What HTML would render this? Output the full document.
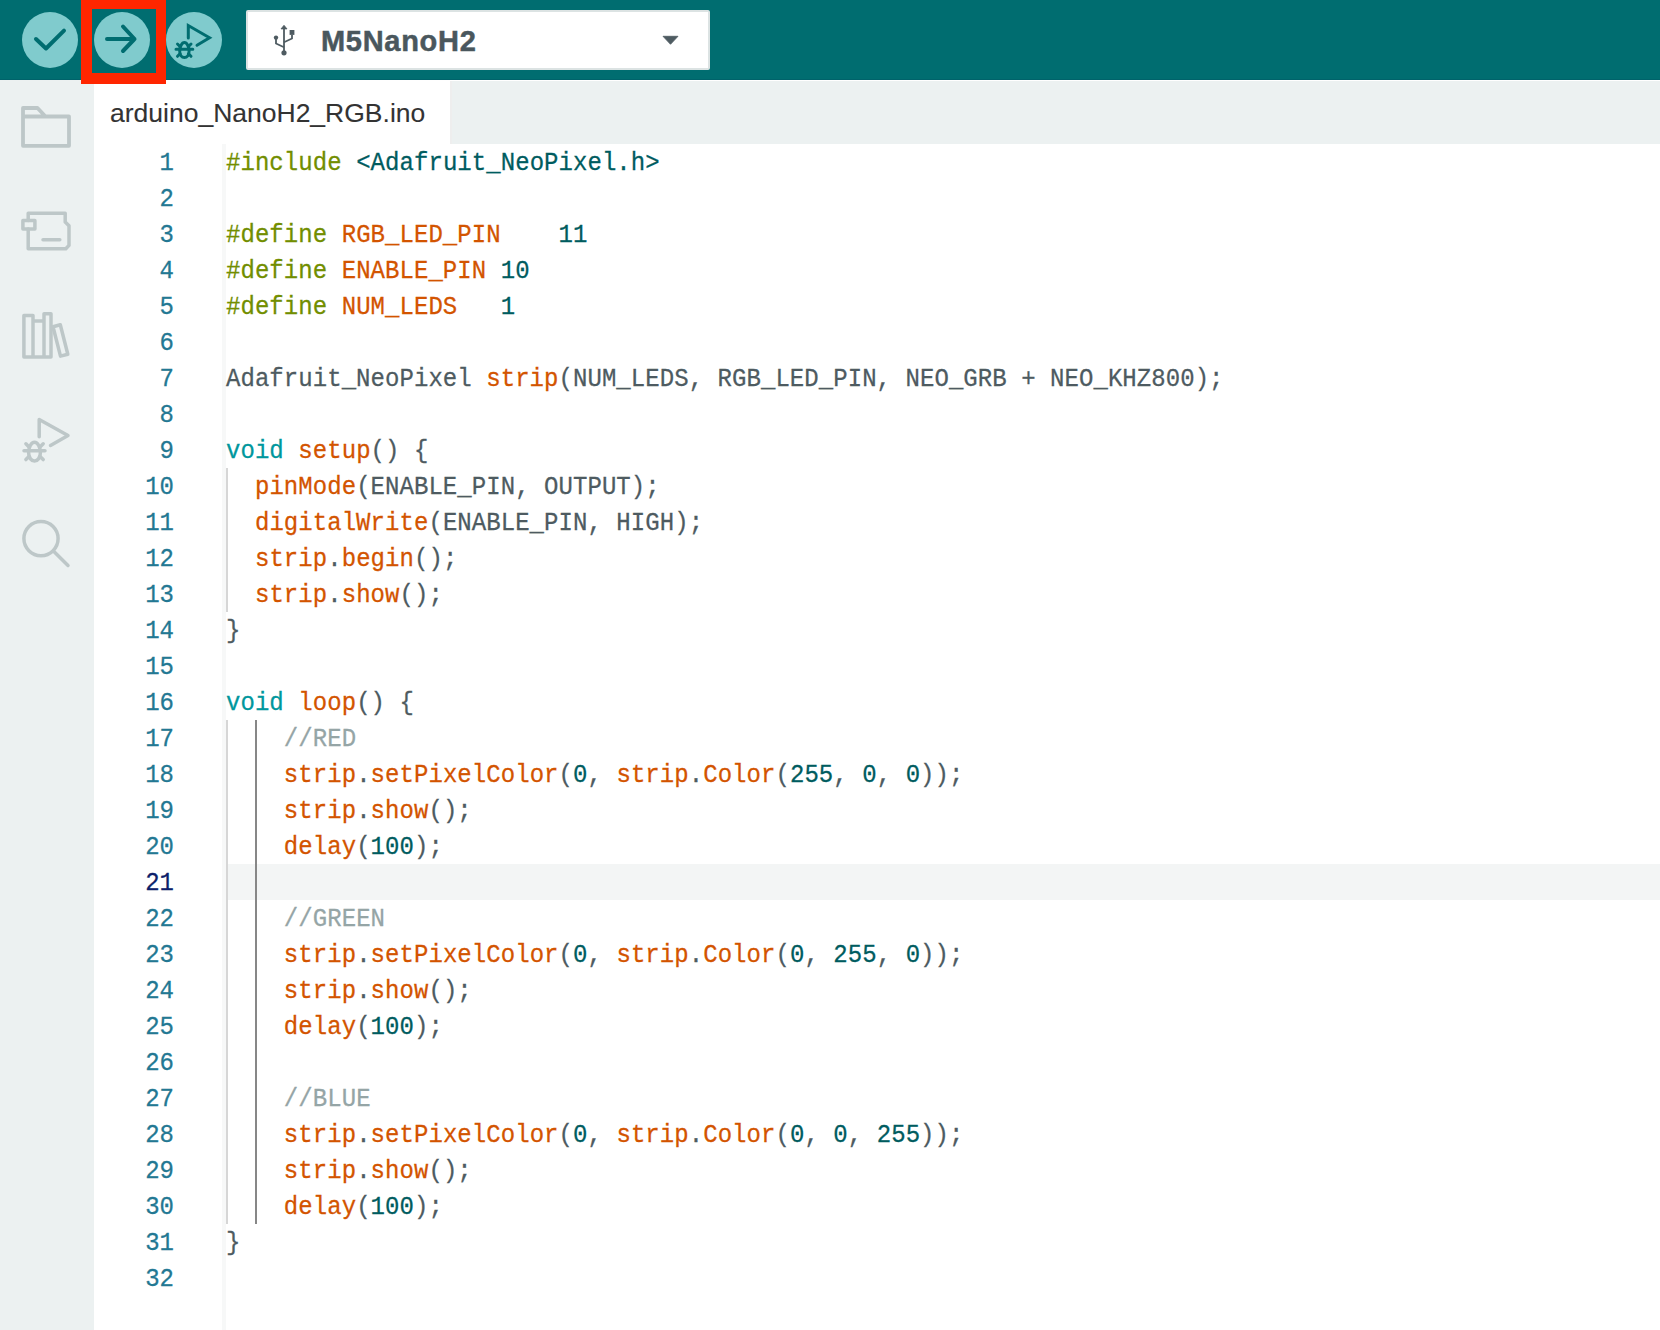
<!DOCTYPE html>
<html><head><meta charset="utf-8">
<style>
*{box-sizing:border-box;margin:0;padding:0}
html,body{width:1660px;height:1330px;overflow:hidden;background:#fff}
body{position:relative;font-family:"Liberation Sans",sans-serif}
svg{position:absolute;left:0;top:0;overflow:visible}
#hdr{position:absolute;left:0;top:0;width:1660px;height:80px;background:#006D70}
#board{position:absolute;left:246px;top:10px;width:464px;height:60px;background:#fff;border:2px solid #DCE3E3;border-radius:2px}
#board .name{position:absolute;left:73px;top:11.5px;font-weight:bold;font-size:29px;line-height:34px;color:#4A575D;letter-spacing:0.7px;-webkit-text-stroke:0.5px currentColor}
#side{position:absolute;left:0;top:80px;width:94px;height:1250px;background:#ECF1F1}
#tabbar{position:absolute;left:94px;top:81px;width:1566px;height:63px;background:#ECF1F1}
#hline{position:absolute;left:0;top:79px;width:1660px;height:1px;background:#00626A}
#tabedge{position:absolute;left:450px;top:81px;width:2px;height:63px;background:#EEEEEE}
#tab{position:absolute;left:94px;top:80px;width:356px;height:64px;background:#fff}
#tab span{position:absolute;left:16px;top:18px;-webkit-text-stroke:0.1px currentColor;font-size:26.5px;line-height:30px;color:#333333;white-space:nowrap}
#strip{position:absolute;left:222px;top:144px;width:4px;height:1186px;background:#F7F8F8}
.ln{position:absolute;left:94px;width:80px;height:36px;line-height:38px;transform:translateY(1.4px) scaleY(1.08);transform-origin:0 24.5px;-webkit-text-stroke:0.25px currentColor;text-align:right;font-family:"Liberation Mono",monospace;font-size:24px;color:#237893}
.ln.cur{color:#0D1F6B}
.cl{position:absolute;left:226px;height:36px;line-height:38px;transform:translateY(1.4px) scaleY(1.08);transform-origin:0 24.5px;white-space:pre;font-family:"Liberation Mono",monospace;font-size:24px;letter-spacing:0.055px;color:#4E5B61;-webkit-text-stroke:0.25px currentColor}
.pp{color:#728E00}.st{color:#005C5F}.fn{color:#D35400}.kw{color:#00979D}.nm{color:#005C5F}.cm{color:#95A5A6}
#curline{position:absolute;left:228px;top:864px;width:1432px;height:36px;background:#F3F5F5}
.g1{position:absolute;left:226px;width:2px;background:#D6D6D6}
.g2{position:absolute;left:255px;width:2px;background:#878787}
#redbox{position:absolute;left:81px;top:-1px;width:84.5px;height:85px;border-style:solid;border-color:#FF2600;border-width:10px 10px 11px 11px;z-index:10}
</style></head><body>
<div id="hdr">
<svg width="1660" height="80">
 <circle cx="50" cy="40" r="28" fill="#80CBCD"/>
 <circle cx="122" cy="40" r="28" fill="#80CBCD"/>
 <circle cx="194" cy="40" r="28" fill="#80CBCD"/>
 <g fill="none" stroke="#006D70" stroke-width="4" stroke-linecap="round" stroke-linejoin="round">
  <path d="M36,39 L46,48.5 L64,30.7"/>
  <path d="M107,39 H134.5 M123,26.5 L134.5,39 L123,51"/>
 </g>
 <g fill="none" stroke="#006D70" stroke-width="3" stroke-linecap="round" stroke-linejoin="miter">
  <path d="M188.3,38 V25.5 L209.5,37.7 L197,45.3"/>
  <path d="M184.4,42.5 C187,42.5 189.1,46.8 189.1,51 C189.1,55 187,57.5 184.4,57.5 C181.8,57.5 179.7,55 179.7,51 C179.7,46.8 181.8,42.5 184.4,42.5 Z"/>
  <path d="M176,49.2 H192.8 M177.5,44 L180,46.5 M191,44 L188.5,46.5 M177.5,56.3 L180,53.8 M191,56.3 L188.5,53.8" stroke-linecap="round"/>
 </g>
</svg>
<div id="hline"></div>
<div id="board">
 <svg width="1660" height="80" style="left:-248px;top:-12px">
  <g fill="#4E5B61" stroke="#4E5B61">
   <path d="M284,27.5 V52.8" stroke-width="1.8" fill="none"/>
   <path d="M281,28.9 L284,25.3 L287,28.9 Z" stroke-width="0.8" stroke-linejoin="round"/>
   <circle cx="284" cy="52.8" r="2.6" stroke="none"/>
   <path d="M276,37.6 V43.5 L284,47.3 M292,34.9 V38.5 L284,42.3" stroke-width="1.8" fill="none" stroke-linejoin="miter"/>
   <circle cx="276" cy="37.6" r="2.2" stroke="none"/>
   <rect x="289.6" y="30" width="4.8" height="4.9" stroke="none"/>
  </g>
  <path d="M663,36.3 H678 L670.5,44.3 Z" fill="#4E5B61" stroke="#4E5B61" stroke-width="0.8" stroke-linejoin="round"/>
 </svg>
 <span class="name">M5NanoH2</span>
</div>
</div>
<div id="side">
<svg width="94" height="1250" style="top:-80px">
 <g fill="none" stroke="#BDC7C8" stroke-width="3.8" stroke-linejoin="round" stroke-linecap="round">
  <path d="M23,108 H37.5 L45.5,116.5 H69 V145.8 H23 Z M23,116.5 H45.5"/>
 </g>
 <g fill="none" stroke="#BDC7C8" stroke-width="3.5" stroke-linejoin="round" stroke-linecap="round">
  <path d="M28.2,220.5 V213.2 H65.2 V222 L69,225.8 V245.4 L65.8,248.8 H28.2 V229"/>
  <path d="M22.9,220.5 H34.9 V229 H22.9 Z"/>
  <path d="M43,239.8 H59.8"/>
  <path d="M23.9,315.4 H33 V357 H23.9 Z M33,321 H44 M33,357 H51 M44,313.7 H51 V357 H44 Z"/>
  <path d="M53,326.7 L60.3,324.8 L67.8,354.2 L60.5,356.1 Z"/>
  <path d="M39.2,436.8 V419.5 L68,435.5 L50.5,445.5"/>
  <path d="M34.5,442.2 C37.8,442.2 40.4,447.5 40.4,452.5 C40.4,457.5 37.8,461 34.5,461 C31.2,461 28.6,457.5 28.6,452.5 C28.6,447.5 31.2,442.2 34.5,442.2 Z"/>
  <path d="M24,450.8 H45 M25.9,443.8 L29,447 M43.2,443.8 L40,447 M25.9,459.6 L29,456.5 M43.2,459.6 L40,456.5"/>
  <circle cx="41" cy="538.6" r="17.1"/>
  <path d="M54.4,551.9 L68,565.4"/>
 </g>
</svg>
</div>
<div id="tabbar"></div><div id="tabedge"></div>
<div id="tab"><span>arduino_NanoH2_RGB.ino</span></div>
<div id="strip"></div>
<div id="curline"></div>
<div class="g1" style="top:468px;height:144px"></div>
<div class="g1" style="top:720px;height:504px"></div>
<div class="g2" style="top:720px;height:504px"></div>
<div id="redbox"></div>
<div id="code">
<div class="ln" style="top:144px">1</div>
<div class="cl" style="top:144px"><span class="pp">#include</span> <span class="st">&lt;Adafruit_NeoPixel.h&gt;</span></div>
<div class="ln" style="top:180px">2</div>
<div class="ln" style="top:216px">3</div>
<div class="cl" style="top:216px"><span class="pp">#define</span> <span class="fn">RGB_LED_PIN</span>    <span class="nm">11</span></div>
<div class="ln" style="top:252px">4</div>
<div class="cl" style="top:252px"><span class="pp">#define</span> <span class="fn">ENABLE_PIN</span> <span class="nm">10</span></div>
<div class="ln" style="top:288px">5</div>
<div class="cl" style="top:288px"><span class="pp">#define</span> <span class="fn">NUM_LEDS</span>   <span class="nm">1</span></div>
<div class="ln" style="top:324px">6</div>
<div class="ln" style="top:360px">7</div>
<div class="cl" style="top:360px">Adafruit_NeoPixel <span class="fn">strip</span>(NUM_LEDS, RGB_LED_PIN, NEO_GRB + NEO_KHZ800);</div>
<div class="ln" style="top:396px">8</div>
<div class="ln" style="top:432px">9</div>
<div class="cl" style="top:432px"><span class="kw">void</span> <span class="fn">setup</span>() {</div>
<div class="ln" style="top:468px">10</div>
<div class="cl" style="top:468px">  <span class="fn">pinMode</span>(ENABLE_PIN, OUTPUT);</div>
<div class="ln" style="top:504px">11</div>
<div class="cl" style="top:504px">  <span class="fn">digitalWrite</span>(ENABLE_PIN, HIGH);</div>
<div class="ln" style="top:540px">12</div>
<div class="cl" style="top:540px">  <span class="fn">strip</span>.<span class="fn">begin</span>();</div>
<div class="ln" style="top:576px">13</div>
<div class="cl" style="top:576px">  <span class="fn">strip</span>.<span class="fn">show</span>();</div>
<div class="ln" style="top:612px">14</div>
<div class="cl" style="top:612px">}</div>
<div class="ln" style="top:648px">15</div>
<div class="ln" style="top:684px">16</div>
<div class="cl" style="top:684px"><span class="kw">void</span> <span class="fn">loop</span>() {</div>
<div class="ln" style="top:720px">17</div>
<div class="cl" style="top:720px">    <span class="cm">//RED</span></div>
<div class="ln" style="top:756px">18</div>
<div class="cl" style="top:756px">    <span class="fn">strip</span>.<span class="fn">setPixelColor</span>(<span class="nm">0</span>, <span class="fn">strip</span>.<span class="fn">Color</span>(<span class="nm">255</span>, <span class="nm">0</span>, <span class="nm">0</span>));</div>
<div class="ln" style="top:792px">19</div>
<div class="cl" style="top:792px">    <span class="fn">strip</span>.<span class="fn">show</span>();</div>
<div class="ln" style="top:828px">20</div>
<div class="cl" style="top:828px">    <span class="fn">delay</span>(<span class="nm">100</span>);</div>
<div class="ln cur" style="top:864px">21</div>
<div class="ln" style="top:900px">22</div>
<div class="cl" style="top:900px">    <span class="cm">//GREEN</span></div>
<div class="ln" style="top:936px">23</div>
<div class="cl" style="top:936px">    <span class="fn">strip</span>.<span class="fn">setPixelColor</span>(<span class="nm">0</span>, <span class="fn">strip</span>.<span class="fn">Color</span>(<span class="nm">0</span>, <span class="nm">255</span>, <span class="nm">0</span>));</div>
<div class="ln" style="top:972px">24</div>
<div class="cl" style="top:972px">    <span class="fn">strip</span>.<span class="fn">show</span>();</div>
<div class="ln" style="top:1008px">25</div>
<div class="cl" style="top:1008px">    <span class="fn">delay</span>(<span class="nm">100</span>);</div>
<div class="ln" style="top:1044px">26</div>
<div class="ln" style="top:1080px">27</div>
<div class="cl" style="top:1080px">    <span class="cm">//BLUE</span></div>
<div class="ln" style="top:1116px">28</div>
<div class="cl" style="top:1116px">    <span class="fn">strip</span>.<span class="fn">setPixelColor</span>(<span class="nm">0</span>, <span class="fn">strip</span>.<span class="fn">Color</span>(<span class="nm">0</span>, <span class="nm">0</span>, <span class="nm">255</span>));</div>
<div class="ln" style="top:1152px">29</div>
<div class="cl" style="top:1152px">    <span class="fn">strip</span>.<span class="fn">show</span>();</div>
<div class="ln" style="top:1188px">30</div>
<div class="cl" style="top:1188px">    <span class="fn">delay</span>(<span class="nm">100</span>);</div>
<div class="ln" style="top:1224px">31</div>
<div class="cl" style="top:1224px">}</div>
<div class="ln" style="top:1260px">32</div>

</div>
</body></html>
